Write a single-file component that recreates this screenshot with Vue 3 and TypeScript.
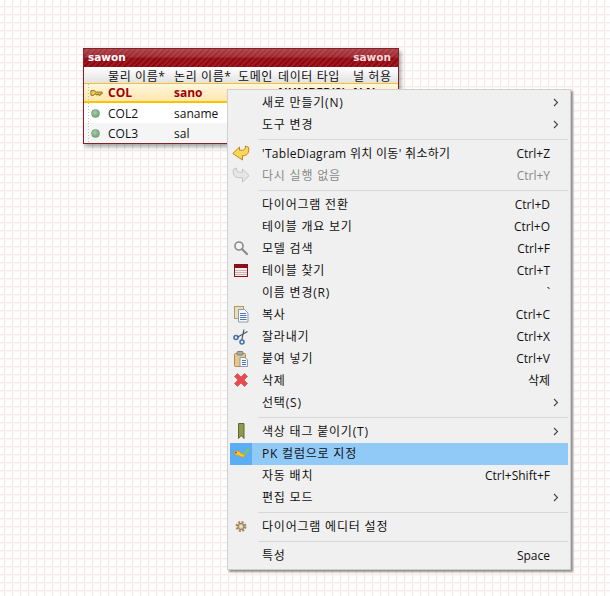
<script setup lang="ts">
interface MenuEntry {
  label?: string
  shortcut?: string
  icon?: string
  arrow?: boolean
  disabled?: boolean
  active?: boolean
  sep?: boolean
  mixed?: boolean
}

const columns: string[] = ['물리 이름*', '논리 이름*', '도메인', '데이터 타입', '널 허용']

const entries: MenuEntry[] = [
  { label: '새로 만들기(N)', arrow: true },
  { label: '도구 변경', arrow: true },
  { sep: true },
  { label: "'TableDiagram 위치 이동' 취소하기", shortcut: 'Ctrl+Z', icon: 'undo', mixed: true },
  { label: '다시 실행 없음', shortcut: 'Ctrl+Y', icon: 'redo', disabled: true },
  { sep: true },
  { label: '다이어그램 전환', shortcut: 'Ctrl+D' },
  { label: '테이블 개요 보기', shortcut: 'Ctrl+O' },
  { label: '모델 검색', shortcut: 'Ctrl+F', icon: 'search' },
  { label: '테이블 찾기', shortcut: 'Ctrl+T', icon: 'table' },
  { label: '이름 변경(R)', shortcut: '`' },
  { label: '복사', shortcut: 'Ctrl+C', icon: 'copy' },
  { label: '잘라내기', shortcut: 'Ctrl+X', icon: 'cut' },
  { label: '붙여 넣기', shortcut: 'Ctrl+V', icon: 'paste' },
  { label: '삭제', shortcut: '삭제', icon: 'delete' },
  { label: '선택(S)', arrow: true },
  { sep: true },
  { label: '색상 태그 붙이기(T)', icon: 'tag', arrow: true },
  { label: 'PK 컬럼으로 지정', icon: 'wand', active: true },
  { label: '자동 배치', shortcut: 'Ctrl+Shift+F' },
  { label: '편집 모드', arrow: true },
  { sep: true },
  { label: '다이어그램 에디터 설정', icon: 'gear' },
  { sep: true },
  { label: '특성', shortcut: 'Space' }
]
</script>

<template>
  <div class="page">
    <section class="table-node">
      <header class="title">
        <span>sawon</span>
        <span class="title-right">sawon</span>
      </header>
      <div class="grid-row head">
        <span class="gutter"></span>
        <span v-for="c in columns" :key="c">{{ c }}</span>
      </div>
      <div class="grid-row pk">
        <span class="gutter">
          <svg width="13" height="8" viewBox="0 0 14 8">
            <path d="M1 1.500h4l1 1.500h7v2h-2v1.500h-1.500v-1.500h-1.500v1h-1.500v-1h-1.500l-1 1.500h-3z" fill="#f2cf56" stroke="#8a6a10" stroke-width="1" />
          </svg>
        </span>
        <span class="name">COL</span>
        <span class="name">sano</span>
        <span class="faint">· ·</span>
        <span class="strong">NUMBER(9)</span>
        <span class="strong">N N</span>
      </div>
      <div class="grid-row">
        <span class="gutter"><i class="dot"></i></span>
        <span>COL2</span>
        <span>saname</span>
      </div>
      <div class="grid-row alt">
        <span class="gutter"><i class="dot"></i></span>
        <span>COL3</span>
        <span>sal</span>
      </div>
    </section>

    <nav class="menu">
      <template v-for="(e, i) in entries" :key="i">
        <div v-if="e.sep" class="sep"></div>
        <div v-else class="item" :class="{ disabled: e.disabled, active: e.active }">
          <span class="icon">
            <svg v-if="e.icon" width="18" height="18" viewBox="0 0 18 18">
              <template v-if="e.icon === 'undo'">
                <path d="M.800 9.500 7.500 3v3.200h3c1.800 0 3-1 3-4.200l3 1.200c1 5.300-1 8.500-5.500 8.500h-.5V16z" fill="#fbd65c" stroke="#c8870f" stroke-linejoin="round" />
              </template>
              <template v-else-if="e.icon === 'redo'">
                <path d="M17.200 9.500 10.500 3v3.200h-3c-1.800 0-3-1-3-4.200l-3 1.200c-1 5.300 1 8.500 5.500 8.500h3.500V16z" fill="#e6e6e6" stroke="#c4c4c4" stroke-linejoin="round" />
              </template>
              <template v-else-if="e.icon === 'search'">
                <circle cx="7" cy="7" r="4" fill="#f4f4f4" stroke="#8a8a8a" stroke-width="1.600" />
                <path d="m10 10 5 5" stroke="#8a8a8a" stroke-width="2.200" stroke-linecap="round" />
              </template>
              <template v-else-if="e.icon === 'table'">
                <rect x="2.500" y="3.500" width="13" height="12" fill="#f6ecec" stroke="#8c0f1a" />
                <rect x="3" y="4" width="12" height="3" fill="#8c0f1a" />
                <path d="M3 9.500h12M3 11.500h12M3 13.500h12" stroke="#c9b4b4" />
              </template>
              <template v-else-if="e.icon === 'copy'">
                <rect x="2.500" y="1.500" width="9" height="12" fill="#eadfb8" stroke="#a99b6f" />
                <path d="M6.500 4.500h6l3.500 3.500v9h-9.500z" fill="#f7f8fb" stroke="#8c9bb0" />
                <path d="M8 8.500h6M8 10.500h6.500M8 12.500h6.500M8 14.500h6.500" stroke="#4f78ad" />
              </template>
              <template v-else-if="e.icon === 'cut'">
                <circle cx="4" cy="10.500" r="2" fill="none" stroke="#3f74ad" stroke-width="1.600" />
                <circle cx="10" cy="15" r="2" fill="none" stroke="#3f74ad" stroke-width="1.600" />
                <path d="M5.800 10 15.500 4.500M9.800 13 12 2.500" stroke="#4a5460" stroke-width="1.200" />
              </template>
              <template v-else-if="e.icon === 'paste'">
                <rect x="2.500" y="4.500" width="11" height="13" rx="1" fill="#e8c78c" stroke="#b08a50" />
                <rect x="5" y="2.500" width="6" height="3.500" rx="1" fill="#a9a9a9" stroke="#7f7f7f" />
                <path d="M8 8.500h5l2.500 2.500v6.500h-7.500z" fill="#f7f8fb" stroke="#8c9bb0" />
                <path d="M10 11.500h4M10 13.500h4M10 15.500h4" stroke="#4f78ad" />
              </template>
              <template v-else-if="e.icon === 'delete'">
                <path d="M2.500 5.500 5.500 2.500 9 6 12.500 2.500 15.500 5.500 12 9 15.500 12.500 12.500 15.500 9 12 5.500 15.500 2.500 12.500 6 9z" fill="#ea4a4f" stroke="#c9585c" stroke-width=".8" />
              </template>
              <template v-else-if="e.icon === 'tag'">
                <path d="M6.500 1.500h5.500v15l-2.750-3-2.750 3z" fill="#8f9a4e" stroke="#5d6830" />
              </template>
              <template v-else-if="e.icon === 'wand'">
                <path d="M9 9 12 11 17 4" fill="none" stroke="#8cc63f" stroke-width="1.800" />
                <path d="M2 8c2-2 4.500-1.500 6 .5 1.500 1 3 2 5 2l-1 2.500c-2.500.5-4-.5-5-1.500-2 .5-4 0-5-3.500z" fill="#f6c832" stroke="#d08a1a" stroke-width=".6" />
                <circle cx="4" cy="8.500" r=".9" fill="#b33" />
              </template>
              <template v-else-if="e.icon === 'gear'">
                <circle cx="9" cy="9.500" r="4.300" fill="none" stroke="#a58a5e" stroke-width="2.400" stroke-dasharray="2 1.380" />
                <circle cx="9" cy="9.500" r="3" fill="#dcc9a4" stroke="#8d7448" />
                <circle cx="9" cy="9.500" r="1" fill="#f1f1f1" />
              </template>
            </svg>
          </span>
          <span class="label" :class="{ mixed: e.mixed }">{{ e.label }}</span>
          <span class="shortcut">{{ e.shortcut }}</span>
          <span class="arrow">
            <svg v-if="e.arrow" width="6" height="9" viewBox="0 0 6 9">
              <path d="m1 1 3.500 3.500L1 8" fill="none" stroke="#444" stroke-width="1.100" />
            </svg>
          </span>
        </div>
      </template>
    </nav>
  </div>
</template>

<style scoped>
.page {
  position: relative;
  width: 610px;
  height: 596px;
  overflow: hidden;
  background-color: #fff;
  background-image:
    linear-gradient(90deg, #f7e9e9 1px, #fcf6f6 1px, #fcf6f6 2px, transparent 2px),
    linear-gradient(180deg, #f7e9e9 1px, #fcf6f6 1px, #fcf6f6 2px, transparent 2px);
  background-size: 8px 8px;
  background-position: 4px 6px;
  font-family: "Open Sans", "Noto Sans CJK KR", sans-serif;
  font-size: 12px;
  color: #111;
}

.table-node {
  position: absolute;
  left: 83px;
  top: 48px;
  width: 314px;
  border: 1px solid #80242a;
  background: #fff;
  box-shadow: 2px 3px 4px rgba(0, 0, 0, 0.35);
}

.title {
  display: flex;
  justify-content: space-between;
  height: 18px;
  padding: 0 7px 0 4px;
  line-height: 16px;
  color: #fff;
  font-family: "DejaVu Sans", sans-serif;
  font-size: 10.5px;
  font-weight: 700;
  background:
    linear-gradient(180deg, rgba(255, 255, 255, 0.22) 0, rgba(255, 255, 255, 0.12) 8px, transparent 9px),
    repeating-linear-gradient(135deg, #8d0a14 0 2px, #a01a22 2px 4px);
}

.title-right {
  color: #f5dada;
}

.grid-row {
  display: grid;
  grid-template-columns: 24px 66px 64px 40px 75px 45px;
  align-items: center;
  height: 20px;
  white-space: nowrap;
}

.head {
  height: 16px;
  letter-spacing: 0.6px;
  background: linear-gradient(180deg, #fff, #e2e2e2);
}

.pk {
  background: linear-gradient(180deg, #fff6dc, #ffe7ae);
  border-top: 1px solid #f2c230;
  border-bottom: 2px solid #fcc400;
  box-sizing: border-box;
}

.alt {
  background: #f5f5f5;
}

.gutter {
  display: flex;
  align-items: center;
  height: 100%;
  padding-left: 7px;
  box-sizing: border-box;
  background: linear-gradient(#bcbcbc 1px, transparent 1px) 4px 0 / 1px 3px repeat-y;
}

.pk .gutter {
  padding-left: 6px;
}

.head .gutter {
  background: none;
}

.name {
  color: #a00008;
  font-weight: 700;
}

.faint {
  color: #bbb;
}

.strong {
  font-weight: 700;
}

.dot {
  display: block;
  width: 7px;
  height: 7px;
  border-radius: 50%;
  background: radial-gradient(circle at 40% 35%, #a5cfa5, #5f9a68);
  border: 1px solid #84a086;
}

.menu {
  position: absolute;
  left: 227px;
  top: 89px;
  width: 338px;
  padding: 2px 2px 2px;
  border: 1px solid #cfcfcf;
  background: #f0f0f0;
  box-shadow: 2px 2px 2px #8e8e8e;
}

.item {
  display: flex;
  align-items: center;
  height: 22px;
}

.item.active {
  background: #91c9f7;
}

.item.active .icon {
  background: linear-gradient(#5aaef5, #5aaef5) 0 0 / 22px 100% no-repeat;
}

.item.disabled {
  color: #8a8a8a;
}

.icon {
  flex: none;
  display: flex;
  align-items: center;
  width: 28px;
  height: 100%;
  padding-left: 2px;
  box-sizing: border-box;
}

.icon svg,
.label,
.shortcut,
.arrow {
  margin-bottom: 2px;
}

.label {
  flex: 1;
  padding-left: 4px;
  white-space: nowrap;
  letter-spacing: 0.8px;
}

.label.mixed {
  letter-spacing: 0.3px;
}

.shortcut {
  white-space: nowrap;
}

.arrow {
  flex: none;
  display: flex;
  align-items: center;
  justify-content: flex-end;
  width: 18px;
  padding-right: 9px;
  box-sizing: border-box;
}

.sep {
  height: 1px;
  margin: 3px 0 3px 28px;
  background: #d7d7d7;
}
</style>
